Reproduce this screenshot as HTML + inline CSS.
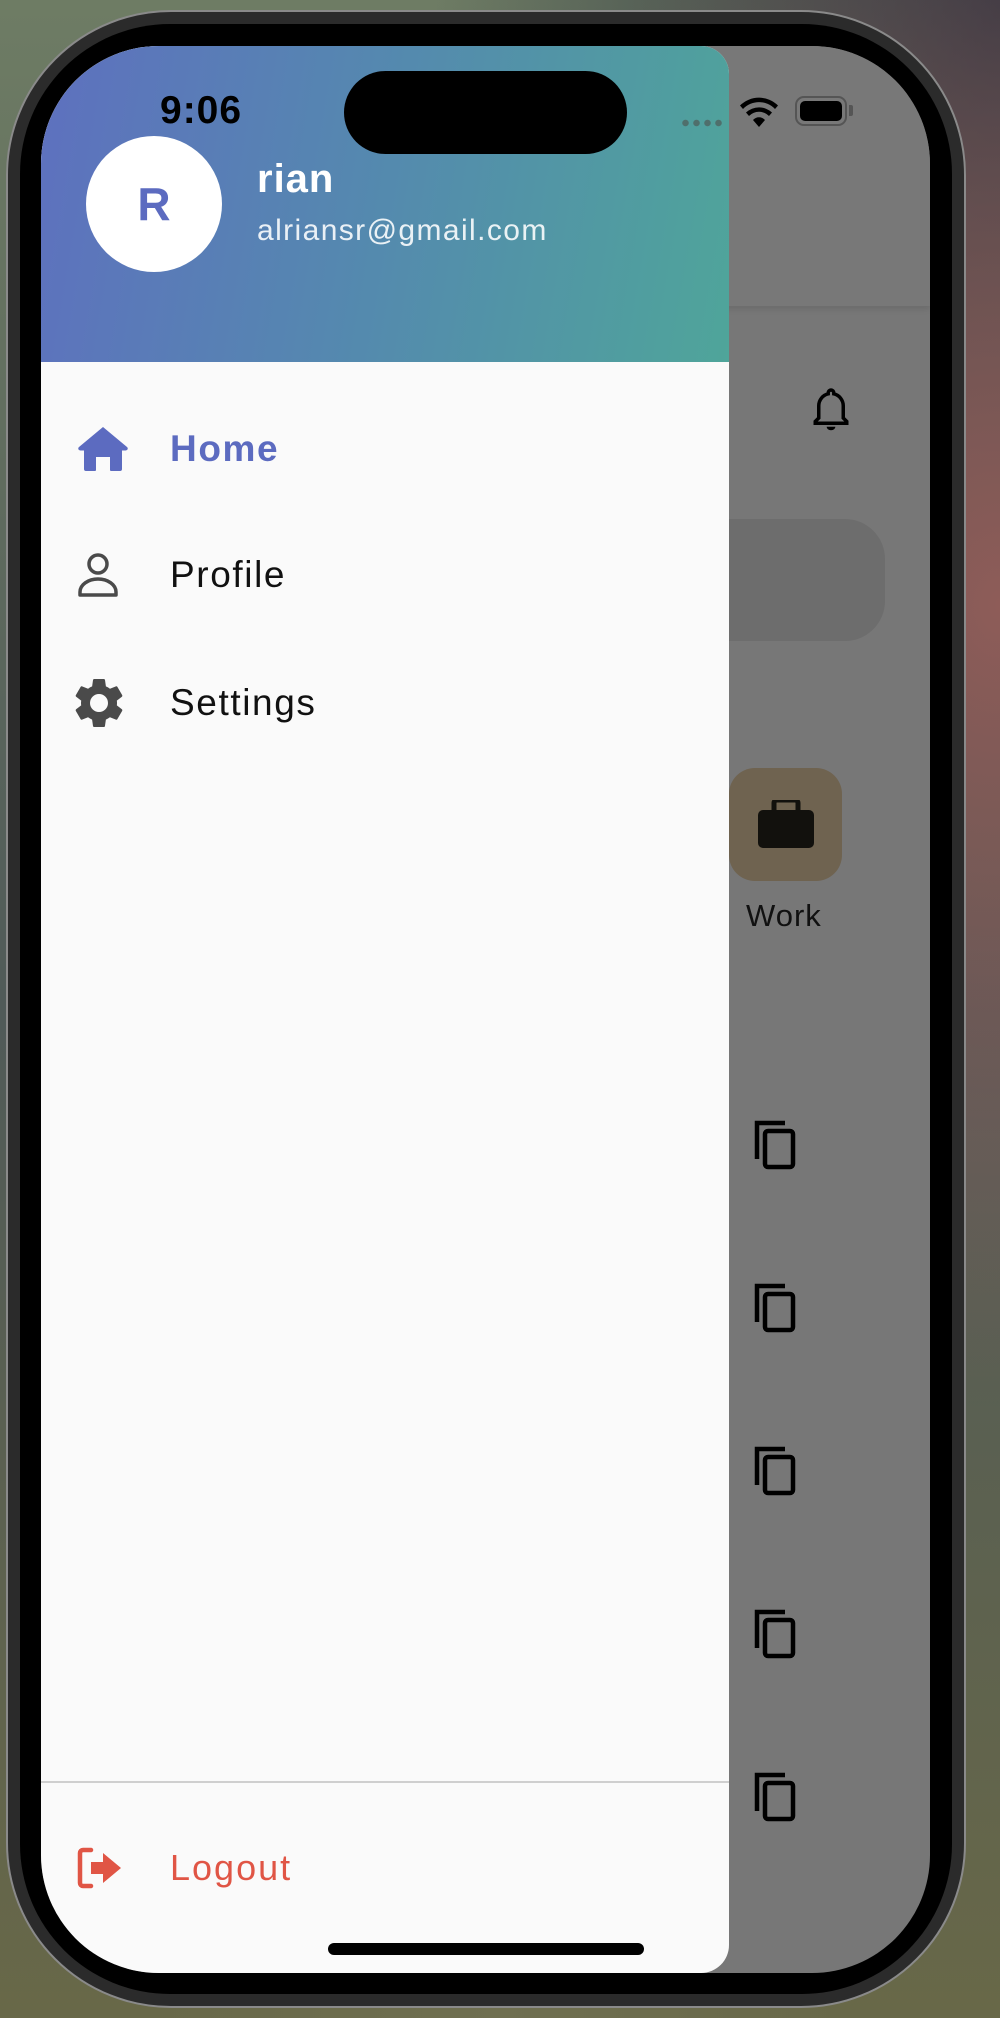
<!DOCTYPE html>
<html><head><meta charset="utf-8"><style>
*{margin:0;padding:0;box-sizing:border-box}
html,body{width:1000px;height:2018px;overflow:hidden}
body{position:relative;font-family:"Liberation Sans",sans-serif;
background:
radial-gradient(ellipse at 100% 30%,#8e5c58 0%,rgba(142,92,88,0) 40%),
radial-gradient(ellipse at 100% 0%,#2e3440 0%,rgba(46,52,64,0) 40%),
radial-gradient(ellipse at 50% 100%,#6f6f50 0%,rgba(111,111,80,0) 50%),
linear-gradient(180deg,#6e7c64,#505a58 50%,#686848);}
.frame{position:absolute;left:6px;top:10px;width:960px;height:1998px;border-radius:165px;background:#2b2b2b;border:2px solid #8a8a8a}
.bezel{position:absolute;left:20px;top:24px;width:932px;height:1970px;border-radius:150px;background:#000}
.screen{position:absolute;left:41px;top:46px;width:889px;height:1927px;border-radius:118px;overflow:hidden;background:#777}
.abs{position:absolute}
.drawer{position:absolute;left:0;top:0;width:688px;height:1927px;background:#fafafa;border-radius:0 28px 28px 0;overflow:hidden}
.header{position:absolute;left:0;top:0;width:688px;height:316px;background:linear-gradient(100deg,#5e70bf 0%,#548aae 50%,#4fa59a 100%)}
.row{position:absolute;left:0;width:688px;height:60px;display:flex;align-items:center}
.row span{position:absolute;left:129px;font-size:37px;letter-spacing:1.6px}
.row svg{position:absolute;left:36px}
</style></head><body>
<div class="frame"></div>
<div class="bezel"></div>
<div class="screen">
  <div class="abs" style="left:0;top:0;width:889px;height:260px;background:#787878;box-shadow:0 3px 6px rgba(0,0,0,.1)"></div>
  <svg class="abs" style="left:769px;top:340px" width="42" height="50" viewBox="0 0 24 28"><path d="M12 2a1.6 1.6 0 0 1 1.6 1.6v.6A7 7 0 0 1 19 11v7l2 2v1H3v-1l2-2v-7a7 7 0 0 1 5.4-6.8v-.6A1.6 1.6 0 0 1 12 2z" fill="none" stroke="#000" stroke-width="2"/><path d="M9.5 23h5a2.5 2 0 0 1-5 0z" fill="#000"/></svg>
  <div class="abs" style="left:560px;top:473px;width:284px;height:122px;border-radius:40px;background:#6d6d6d"></div>
  <div class="abs" style="left:688px;top:722px;width:113px;height:113px;border-radius:26px;background:#6f6350"></div>
  <svg class="abs" style="left:715px;top:754px" width="60" height="50" viewBox="0 0 60 50"><rect x="18" y="0" width="24" height="14" rx="3" fill="none" stroke="#12110d" stroke-width="5"/><rect x="2" y="10" width="56" height="38" rx="5" fill="#12110d"/></svg>
  <div class="abs" style="left:705px;top:852px;font-size:31px;color:#111;letter-spacing:1px">Work</div>
  <svg class="abs" style="left:712px;top:1073px" width="46" height="52" viewBox="0 0 46 52"><path d="M4 40V4h28" fill="none" stroke="#000" stroke-width="4.5"/><rect x="12" y="12" width="28" height="36" rx="3" fill="none" stroke="#000" stroke-width="4.5"/></svg>
  <svg class="abs" style="left:712px;top:1236px" width="46" height="52" viewBox="0 0 46 52"><path d="M4 40V4h28" fill="none" stroke="#000" stroke-width="4.5"/><rect x="12" y="12" width="28" height="36" rx="3" fill="none" stroke="#000" stroke-width="4.5"/></svg>
  <svg class="abs" style="left:712px;top:1399px" width="46" height="52" viewBox="0 0 46 52"><path d="M4 40V4h28" fill="none" stroke="#000" stroke-width="4.5"/><rect x="12" y="12" width="28" height="36" rx="3" fill="none" stroke="#000" stroke-width="4.5"/></svg>
  <svg class="abs" style="left:712px;top:1562px" width="46" height="52" viewBox="0 0 46 52"><path d="M4 40V4h28" fill="none" stroke="#000" stroke-width="4.5"/><rect x="12" y="12" width="28" height="36" rx="3" fill="none" stroke="#000" stroke-width="4.5"/></svg>
  <svg class="abs" style="left:712px;top:1725px" width="46" height="52" viewBox="0 0 46 52"><path d="M4 40V4h28" fill="none" stroke="#000" stroke-width="4.5"/><rect x="12" y="12" width="28" height="36" rx="3" fill="none" stroke="#000" stroke-width="4.5"/></svg>

  <div class="drawer">
    <div class="header"></div>
    <div class="abs" style="left:45px;top:90px;width:136px;height:136px;border-radius:50%;background:#fff;display:flex;align-items:center;justify-content:center;font-size:46px;font-weight:bold;color:#5c6bc0">R</div>
    <div class="abs" style="left:216px;top:111px;font-size:40px;font-weight:bold;color:#fff;letter-spacing:1px">rian</div>
    <div class="abs" style="left:216px;top:168px;font-size:30px;color:rgba(255,255,255,.88);letter-spacing:1.4px">alriansr@gmail.com</div>

    <div class="row" style="top:373px"><svg width="52" height="46" viewBox="0 0 52 46"><path d="M26 1L2 21c-1.5 1.3-.6 3.5 1.4 3.5H7V43a2 2 0 0 0 2 2h9a1 1 0 0 0 1-1V31h14v13a1 1 0 0 0 1 1h9a2 2 0 0 0 2-2V24.5h3.6c2 0 2.9-2.2 1.4-3.5z" fill="#5c6bc0"/></svg><span style="color:#5c6bc0;font-weight:bold">Home</span></div>
    <div class="row" style="top:499px"><svg width="42" height="46" viewBox="0 0 42 46"><circle cx="21" cy="12" r="9" fill="none" stroke="#4a4a4a" stroke-width="3.5"/><path d="M3 43v-3a18 13 0 0 1 36 0v3z" fill="none" stroke="#4a4a4a" stroke-width="3.5" stroke-linejoin="round"/></svg><span style="color:#111">Profile</span></div>
    <div class="row" style="top:627px"><svg width="50" height="52" viewBox="2 2 20 20" style="left:33px"><path fill="#4a4a4a" d="M19.14 12.94c.04-.3.06-.61.06-.94 0-.32-.02-.64-.07-.94l2.03-1.58a.49.49 0 0 0 .12-.61l-1.92-3.32a.49.49 0 0 0-.59-.22l-2.39.96c-.5-.38-1.030-.7-1.62-.94l-.36-2.54a.48.48 0 0 0-.48-.41h-3.84c-.24 0-.43.17-.47.41l-.36 2.54c-.59.24-1.13.57-1.62.94l-2.39-.96a.49.49 0 0 0-.59.22L2.74 8.87c-.12.21-.08.47.12.61l2.03 1.58c-.05.3-.09.63-.09.94s.02.64.07.94l-2.030 1.58a.49.49 0 0 0-.12.61l1.92 3.32c.12.22.37.29.59.22l2.39-.96c.5.38 1.03.7 1.62.94l.36 2.54c.05.24.24.41.48.41h3.84c.24 0 .44-.17.47-.41l.36-2.54c.59-.24 1.13-.56 1.62-.94l2.39.96c.22.08.47 0 .59-.22l1.92-3.32a.47.47 0 0 0-.12-.61l-2.01-1.58zM12 15.6A3.6 3.6 0 1 1 12 8.4a3.6 3.6 0 0 1 0 7.2z"/></svg><span style="color:#111">Settings</span></div>

    <div class="abs" style="left:0;top:1735px;width:688px;height:2px;background:#cfcfcf"></div>
    <div class="row" style="top:1792px"><svg width="48" height="42" viewBox="0 0 48 42"><path d="M14 3H6a3 3 0 0 0-3 3v30a3 3 0 0 0 3 3h8" fill="none" stroke="#e05545" stroke-width="4.5" stroke-linecap="round"/><path d="M14 15h12V6l18 15-18 15v-9H14z" fill="#e05545"/></svg><span style="color:#e05545;font-size:36px;letter-spacing:2px">Logout</span></div>
    <div class="abs" style="left:287px;top:1897px;width:316px;height:12px;border-radius:6px;background:#000"></div>
  </div>

  <div class="abs" style="left:119px;top:43px;font-size:39px;font-weight:bold;color:#000;letter-spacing:1px">9:06</div>
  <div class="abs" style="left:303px;top:25px;width:283px;height:83px;border-radius:42px;background:#000"></div>
  <div class="abs" style="left:639px;top:73px;width:44px;height:8px;background:radial-gradient(circle,#4f6f6c 3px,transparent 3.5px) 0 0/11px 8px repeat-x"></div>
  <svg class="abs" style="left:698px;top:50px" width="40" height="32" viewBox="0 0 40 32"><path d="M20 31l-6-7a8 8 0 0 1 12 0z M10 20a14 14 0 0 1 20 0l3-3.5a19 19 0 0 0-26 0z M4 13a22 22 0 0 1 32 0l3-3.5a27 27 0 0 0-38 0z" fill="#000"/></svg>
  <div class="abs" style="left:754px;top:50px;width:52px;height:30px;border:2.5px solid #555;border-radius:9px;padding:3px"><div style="width:100%;height:100%;background:#000;border-radius:5px"></div></div>
  <div class="abs" style="left:808px;top:59px;width:4px;height:11px;background:#555;border-radius:0 2px 2px 0"></div>
</div>
</body></html>
